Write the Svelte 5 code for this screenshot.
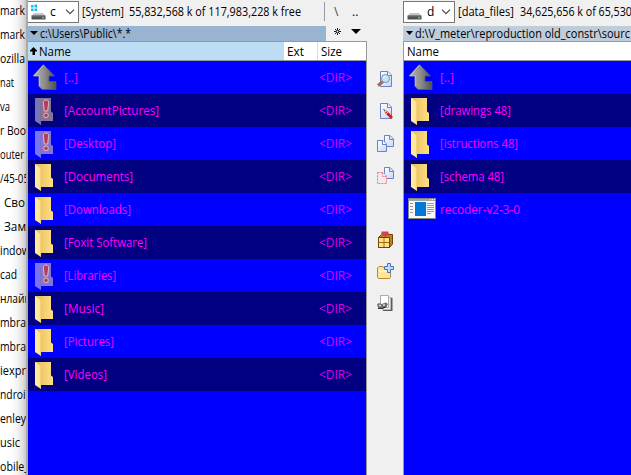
<script>
  const labels = [
    ['mark', 0, 25], ['mark', 0, 25], ['ozilla', 0, 25], ['nat', -1, 14], ['va', 0, 10],
    ['r Boo', 0, 26], ['outer', 0, 24], ['/45-05', -1, 29], ['Сво', 4, 21], ['Зам', 4, 22],
    ['indow', 0, 30], ['cad', 0, 17], ['нлайн', 0, 31], ['mbra', 0, 26], ['mbra', 0, 26],
    ['iexpr', 0, 26], ['ndroid', 0, 32], ['enley', 0, 26], ['usic', 0, 20], ['obile_', 0, 29]
  ];
  const left = [
    ['[..]', 14, 'up'], ['[AccountPictures]', 95, 'hidden'], ['[Desktop]', 52, 'hidden'],
    ['[Documents]', 69, 'folder'], ['[Downloads]', 67, 'folder'], ['[Foxit Software]', 83, 'folder'],
    ['[Libraries]', 52, 'hidden'], ['[Music]', 40, 'folder'], ['[Pictures]', 50, 'folder'], ['[Videos]', 43, 'folder']
  ];
  const right = [
    ['[..]', 14, 'up'], ['[drawings 48]', 71, 'folder'], ['[istructions 48]', 78, 'folder'],
    ['[schema 48]', 64, 'folder'], ['recoder-v2-3-0', 80, 'app']
  ];

  function fit(node, width) {
    const natural = node.getBoundingClientRect().width;
    node.style.transform = `scaleX(${width / natural})`;
    node.style.marginRight = `${width - natural}px`;
  }
</script>

{#snippet t(text, width)}<span class="t" use:fit={width}>{text}</span>{/snippet}

{#snippet icon(kind)}
  {#if kind === 'up'}
    <svg width="28" height="33" viewBox="0 0 28 33">
      <path d="M11.5 3.5 L22.5 15 H17 V20.5 H24 V28.5 H10 L7 25.5 V15 H1 Z" fill="url(#metal)" stroke="#555c66" stroke-width=".7" />
      <path d="M11.5 4 L1.8 14.8 H7.3 V25" fill="none" stroke="#d0d0d0" stroke-width=".8" />
    </svg>
  {:else if kind === 'app'}
    <svg width="28" height="33" viewBox="0 0 28 33" shape-rendering="crispEdges">
      <rect x="0.5" y="5.5" width="27" height="20" fill="#f7f7f7" stroke="#858585" />
      <path d="M1 6H27V8H1Z" fill="#a5a5a5" /><path d="M22 6h1v1h-1zM24 6h1v1h-1zM26 6h1v1h-1z" fill="#eee" />
      <path d="M7 9H18V23H7Z" fill="#0078d7" />
      <path d="M2 10h3v1H2zM2 13h3v1H2zM2 16h3v1H2zM2 19h3v1H2zM19 10h7v1h-7zM19 12h7v1h-7zM19 14h7v1h-7zM19 16h7v1h-7zM19 18h7v1h-7zM19 20h4v1h-4z" fill="#999" />
    </svg>
  {:else}
    <svg width="28" height="33" viewBox="0 0 28 33">
      <g opacity={kind === 'hidden' ? 0.55 : 1}>
        <path d="M3 4H19V17.5L21 19V27H3Z" fill={kind === 'hidden' ? '#f5d3a6' : 'url(#gold)'} />
        <path d="M3 4L9 8.5V31L3 27Z" fill={kind === 'hidden' ? '#ddd2f3' : 'url(#flap)'} />
        <path d="M8.6 8.5V30.5" stroke="#e8c362" stroke-width=".6" />
      </g>
      {#if kind === 'hidden'}
        <path d="M14 6c2.4 0 2.8 1.5 2.5 3.8L15.7 17h-3.4l-.8-7.2C11.2 7.5 11.6 6 14 6Z" fill="#b13b58" stroke="#d8bfd0" />
        <circle cx="14" cy="21.3" r="2.3" fill="#b13b58" stroke="#d8bfd0" />
      {/if}
    </svg>
  {/if}
{/snippet}

{#snippet drive(sys)}
  <svg class="drive" width="17" height="17" viewBox="0 0 17 17">
    {#if sys}<path d="M1 1h2.5v2.5H1zM4.5 .5h2.5V3.5H4.5zM1 4.5h2.5V7H1zM4.5 4.5h2.5V7H4.5z" fill="#18b8f4" />{/if}
    <path d="M4 9H13L15.5 12H1.5Z" fill="#c6c6c6" /><path d="M1.5 11.5H15.5V15.5H1.5Z" fill="#505152" />
    <path d="M2 12H15" stroke="#777" /><path d="M12 13h2v1.5h-2z" fill="#28e56a" />
  </svg>
{/snippet}

{#snippet sheet()}
  <path d="M3.5 .5H11L14.5 4V15.5H3.5Z" fill="url(#paper)" stroke="#6b83c4" />
  <path d="M10.5 .5V4.5H14.5" fill="#eef3ff" stroke="#6b83c4" />
{/snippet}

<svg class="defs" width="0" height="0">
  <defs>
    <linearGradient id="metal"><stop stop-color="#bbb" /><stop offset=".5" stop-color="#8d8d8d" /><stop offset="1" stop-color="#505050" /></linearGradient>
    <linearGradient id="gold"><stop stop-color="#e6bd57" /><stop offset="1" stop-color="#ffdf85" /></linearGradient>
    <linearGradient id="flap"><stop stop-color="#ffedab" /><stop offset="1" stop-color="#ffe28f" /></linearGradient>
    <linearGradient id="paper" x2="1" y2="1"><stop stop-color="#fff" /><stop offset="1" stop-color="#c5d7fa" /></linearGradient>
  </defs>
</svg>

<main>
  <aside>
    {#each labels as [text, x, w]}
      <div class="label" style:padding-left="{Math.max(x, 0)}px">{@render t(text, w)}</div>
    {/each}
  </aside>

  <section class="pane first">
    <div class="drives">
      <div class="combo">{@render drive(true)}<span class="letter">c</span><svg class="chev" width="10" height="6"><path d="M1 .7L5 4.7L9 .7" /></svg></div>
      <div class="sys">{@render t('[System]', 42)}</div>
      <div class="free">{@render t('55,832,568 k of 117,983,228 k free', 172)}</div>
      <i class="sep"></i><span class="root">\</span><span class="parent">..</span>
    </div>
    <div class="pathrow">
      <div class="path"><svg width="8" height="4"><path d="M0 0H8L4 4Z" /></svg>{@render t('c:\\Users\\Public\\*.*', 91)}</div>
      <svg class="star" width="9" height="9" viewBox="0 0 9 9"><path d="M4.5 1V8M1 4.5H8M2 2L7 7M7 2L2 7" stroke="#000" stroke-width=".9" /><circle cx="4.5" cy="4.5" r="1" fill="#eee" /></svg>
      <svg width="10" height="5"><path d="M0 0H10L5 5Z" /></svg>
    </div>
    <div class="head">
      <div class="name sorted"><svg width="7" height="8"><path d="M3.5 0L7 3.5V4.5H5V8H2.5V4.5H0V3.5Z" /></svg>{@render t('Name', 32)}</div>
      <div class="ext">{@render t('Ext', 17)}</div><div class="size">{@render t('Size', 21)}</div>
    </div>
    <div class="list">
      {#each left as [text, w, kind]}
        <div class="row">{@render icon(kind)}<span class="file">{@render t(text, w)}</span><span class="dir">{@render t('<DIR>', 33)}</span></div>
      {/each}
    </div>
  </section>

  <nav>
    <svg width="17" height="17" viewBox="0 0 17 17">{@render sheet()}<path d="M1 14.5L6 10.5" stroke="#a56a4a" stroke-width="3" /><circle cx="8.5" cy="7.5" r="4" fill="#c3e4f7" stroke="#7993a9" /><path d="M6.5 7Q7 5 9 5" fill="none" stroke="#fff" /></svg>
    <svg width="17" height="17" viewBox="0 0 17 17">{@render sheet()}<path d="M7 7L10 8L16 14L14 16L8 10Z" fill="#cf2014" /><path d="M6.5 6.5L10 8L8 10Z" fill="#f4c987" /><path d="M11 9L9 11" stroke="#ffd65c" /><path d="M6.5 6.5L8 7.5" stroke="#222" /></svg>
    <svg width="17" height="17" viewBox="0 0 17 17"><path d="M7.5 .5H13L16.5 4V11.5H7.5Z" fill="url(#paper)" stroke="#6b83c4" /><path d="M12.5 .5V4.5H16.5" fill="none" stroke="#6b83c4" /><path d="M.5 5.5H6L9.5 9V16.5H.5Z" fill="url(#paper)" stroke="#6b83c4" /><path d="M5.5 5.5V9.5H9.5" fill="#fff" stroke="#6b83c4" /></svg>
    <svg width="17" height="17" viewBox="0 0 17 17"><path d="M7.5 .5H13L16.5 4V11.5H7.5Z" fill="url(#paper)" stroke="#6b83c4" /><path d="M12.5 .5V4.5H16.5" fill="none" stroke="#6b83c4" /><path d="M.5 5.5H6L9.5 9V16.5H.5Z" fill="#f5e9ee" stroke="#ee7a86" stroke-dasharray="2 1" /><path d="M5.5 5.5V9.5H9.5" fill="none" stroke="#ee7a86" stroke-dasharray="2 1" /></svg>
    <svg class="pack" width="17" height="17" viewBox="0 0 17 17"><path d="M1.5 6.5L4.5 3.5H15.5V13L12.5 16.5H1.5Z" fill="#b98320" stroke="#704408" /><path d="M2 7H12.5V16H2Z" fill="#ffe18a" /><path d="M2 11.5H12.5M7 7V16" stroke="#a16b12" /><path d="M4.5 .5H11.5V2.5H12.5L8.5 6L4 2.5H4.5Z" fill="#dc3d50" /><path d="M1.5 6.5H12.5V16.5H1.5Z" fill="none" stroke="#704408" /></svg>
    <svg width="17" height="17" viewBox="0 0 17 17"><path d="M.5 5L2 3.5H6L7.5 5.5H13.5V14L12.5 15.5H1.5L.5 14Z" fill="#ffe596" stroke="#b28a35" /><path d="M2 8H12.5" stroke="#fff2bd" stroke-width="2" /><path d="M10.5 .5h3v3h3v3h-3v3h-3v-3h-3v-3h3Z" fill="#b9dcff" stroke="#4973bc" /></svg>
    <svg width="17" height="17" viewBox="0 0 17 17"><path d="M12 2L15.5 3V16H6V14" fill="#5b5b5b" /><path d="M11 2.5H13.5V14.5H5" fill="#eee" stroke="#bbb" /><path d="M3.5 .5H11.5V12.5H3.5Z" fill="#fff" stroke="#aaa" /><path d="M0 9.5L2 8L4.5 9L9 7.5L11 9L9.5 12L5 14H1.5Z" fill="#707070" /><path d="M2 10.5H4M6 10H8" stroke="#ddd" stroke-width="1.6" /><path d="M1 13.5H5L9 11.8" stroke="#333" stroke-width="1.2" fill="none" /></svg>
  </nav>

  <section class="pane second">
    <div class="drives">
      <div class="combo">{@render drive(false)}<span class="letter">d</span><svg class="chev" width="10" height="6"><path d="M1 .7L5 4.7L9 .7" /></svg></div>
      <div class="sys">{@render t('[data_files]', 56)}</div>
      <div class="free">{@render t('34,625,656 k of 65,530', 112)}</div>
    </div>
    <div class="pathrow"><div class="path"><svg width="7" height="4"><path d="M0 0H7L3.5 4Z" /></svg>{@render t('d:\\V_meter\\reproduction old_constr\\sourc', 215)}</div></div>
    <div class="head"><div class="name">{@render t('Name', 32)}</div></div>
    <div class="list">
      {#each right as [text, w, kind]}
        <div class="row">{@render icon(kind)}<span class="file">{@render t(text, w)}</span></div>
      {/each}
    </div>
  </section>
</main>

<style>
  :global(body) { overflow: hidden; }
  main { width: 631px; height: 475px; display: flex; overflow: hidden; background: #f0f0f0; color: #000; font: 12px/16px "Open Sans", "Noto Sans", sans-serif; }
  .defs { position: absolute; }
  svg { display: block; flex: none; }
  .t { display: inline-block; white-space: pre; transform-origin: 0 50%; }
  aside { width: 26px; flex: none; overflow: hidden; background: linear-gradient(90deg, #fff 0 11px, #f4f4f4 17px, #dedede 23px, #c8c8c8 26px); }
  .label { box-sizing: border-box; height: 24px; line-height: 22px; white-space: nowrap; }
  .pane { box-sizing: border-box; display: flex; flex-direction: column; height: 475px; overflow: hidden; flex: none; }
  .first { width: 341px; border-left: 2px solid #aaa; }
  .second { width: 228px; }
  .drives { height: 25px; display: flex; flex: none; line-height: 24px; white-space: nowrap; }
  .combo { box-sizing: border-box; margin-top: 1px; height: 22px; width: 51px; border: 1px solid #777; background: #fff; display: flex; align-items: center; flex: none; line-height: 20px; }
  .second .combo { width: 52px; }
  .first .combo { border-left: 0; }
  .drive { margin-left: 2px; }
  .letter { width: 15px; margin-left: 3px; }
  .second .letter { margin-left: 4px; width: 14px; }
  .chev { fill: none; stroke: #444; stroke-width: 1.1; }
  .sys { width: 47px; margin-left: 3px; flex: none; }
  .second .sys { width: 62px; }
  .free { width: 194px; flex: none; }
  .sep { height: 19px; width: 1px; margin: 2px 9px 0 1px; background: #999; flex: none; }
  .root { width: 18px; color: #444; }
  .pathrow { height: 16px; flex: none; display: flex; align-items: center; }
  .path { height: 15px; width: 298px; background: #99b4d1; display: flex; align-items: center; gap: 2px; padding-left: 2px; box-sizing: border-box; line-height: 15px; overflow: hidden; margin-right: 7px; flex: none; white-space: nowrap; }
  .second .path { width: 228px; background: #bfcddb; padding-left: 3px; }
  .star { margin-right: 9px; margin-bottom: 3px; }
  .star + svg { margin-bottom: 3px; }
  .head { height: 20px; box-sizing: border-box; border: solid #999; border-width: 1px 1px 1px 0; flex: none; display: flex; background: #fff; line-height: 19px; }
  .second .head { border-left-width: 1px; border-right: 0; }
  .head > div { display: flex; align-items: center; }
  .name { box-sizing: border-box; padding-left: 2px; }
  .second .name { padding-left: 3px; }
  .sorted { width: 256px; background: #bcddf3; gap: 2px; }
  .ext { width: 33px; padding-left: 3px; box-sizing: border-box; }
  .size { border-left: 1px solid #ddd; padding-left: 3px; }
  .list { flex: 1; background: #00f; color: #f0f; border-right: 1px solid #999; }
  .second .list { border-left: 1px solid #999; border-right: 0; }
  .row { height: 33px; display: flex; align-items: center; padding-left: 4px; }
  .row:nth-child(even) { background: #000080; }
  .file { width: 255px; margin-left: 4px; flex: none; }
  .dir { opacity: .85; }
  nav { width: 36px; flex: none; padding: 71px 0 0 10px; box-sizing: border-box; display: flex; flex-direction: column; gap: 15px; }
  .pack { margin-top: 32px; }
</style>
